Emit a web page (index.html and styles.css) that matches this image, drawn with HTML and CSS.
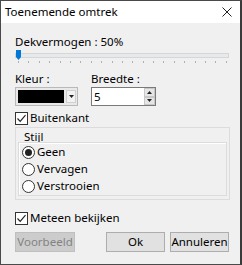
FILE: index.html
```html
<!DOCTYPE html>
<html>
<head>
<meta charset="utf-8">
<link rel="stylesheet" href="styles.css">
</head>
<body>
<div class="window">
  <div class="titlebar">
    <span class="title">Toenemende omtrek</span>
    <svg class="close" width="10" height="10" viewBox="0 0 10 10"><path d="M0.5 0.5 L9.5 9.5 M9.5 0.5 L0.5 9.5" stroke="#222" stroke-width="1" fill="none"/></svg>
  </div>
  <div class="content">
    <div class="label opacity-label">Dekvermogen : 50%</div>
    <div class="slider">
      <div class="track"></div>
      <div class="thumb"></div>
    </div>
    <div class="ticks">
      <i></i><i></i><i></i><i></i><i></i><i></i><i></i><i></i><i></i><i></i><i></i><i></i><i></i><i></i><i></i><i></i><i></i><i></i><i></i><i></i><i></i>
    </div>
    <div class="fields">
      <div class="field color-field">
        <div class="label">Kleur :</div>
        <div class="combo">
          <div class="swatch"></div>
          <div class="combo-btn"><svg width="5" height="3" viewBox="0 0 5 3"><path d="M0 0 H5 L2.5 3 Z" fill="#222"/></svg></div>
        </div>
      </div>
      <div class="field width-field">
        <div class="label">Breedte :</div>
        <div class="spin">
          <span class="spin-value">5</span>
          <div class="spin-btns">
            <div class="spin-btn"><svg width="5" height="3" viewBox="0 0 5 3"><path d="M0 3 H5 L2.5 0 Z" fill="#222"/></svg></div>
            <div class="spin-btn"><svg width="5" height="3" viewBox="0 0 5 3"><path d="M0 0 H5 L2.5 3 Z" fill="#222"/></svg></div>
          </div>
        </div>
      </div>
    </div>
    <div class="check outer-check">
      <span class="box"><svg width="11" height="11" viewBox="0 0 11 11"><path d="M1.5 5.5 L4.2 8.3 L9.5 2.2" stroke="#222" stroke-width="1.2" fill="none"/></svg></span>
      <span>Buitenkant</span>
    </div>
    <div class="group">
      <div class="group-title">Stijl</div>
      <div class="group-inner">
        <div class="radio"><span class="circle on"></span><span>Geen</span></div>
        <div class="radio"><span class="circle"></span><span>Vervagen</span></div>
        <div class="radio"><span class="circle"></span><span>Verstrooien</span></div>
      </div>
    </div>
    <div class="check preview-check">
      <span class="box"><svg width="11" height="11" viewBox="0 0 11 11"><path d="M1.5 5.5 L4.2 8.3 L9.5 2.2" stroke="#222" stroke-width="1.2" fill="none"/></svg></span>
      <span>Meteen bekijken</span>
    </div>
    <div class="buttons">
      <div class="btn disabled">Voorbeeld</div>
      <div class="btn-group">
        <div class="btn">Ok</div>
        <div class="btn">Annuleren</div>
      </div>
    </div>
  </div>
</div>
</body>
</html>
```

FILE: styles.css
```css
html, body {
  margin: 0;
  padding: 0;
  background: #3a3a3a;
}
body {
  font-family: "Noto Sans", "Open Sans", sans-serif;
  font-size: 11.5px;
  color: #000;
}
.window {
  width: 242px;
  height: 265px;
  box-sizing: border-box;
  border-top: 1px solid #4a4a4a;
  border-left: 1px solid #4a4a4a;
  border-bottom: 1px solid #4a4a4a;
  border-right: 2px solid #3a3a3a;
  background: #f0f0f0;
  display: flex;
  flex-direction: column;
  overflow: hidden;
}
.titlebar {
  height: 22px;
  background: #ffffff;
  display: flex;
  align-items: center;
  padding: 0 8px 0 4px;
  flex-shrink: 0;
}
.title {
  flex: 1;
  font-size: 11.5px;
  line-height: 14px;
}
.close {
  display: block;
}
.content {
  padding: 11px 11px 0 14px;
  display: flex;
  flex-direction: column;
}
.label {
  line-height: 16px;
  height: 16px;
}
.slider {
  position: relative;
  height: 10px;
}
.track {
  position: absolute;
  left: 0;
  right: 0;
  top: 3px;
  height: 5px;
  background: #e7eaea;
  border: 1px solid #d6d6d6;
  box-sizing: border-box;
}
.thumb {
  position: absolute;
  left: 1px;
  top: 0;
  width: 5px;
  height: 10px;
  background: #0078d7;
  clip-path: polygon(0 0, 100% 0, 100% 70%, 50% 100%, 0 70%);
}
.ticks {
  display: flex;
  justify-content: space-between;
  padding: 0 2px 0 3px;
  height: 3px;
  margin-top: 1px;
}
.ticks i {
  display: block;
  width: 1px;
  height: 2px;
  background: #b0b0b0;
}
.fields {
  display: flex;
  gap: 13px;
  margin-top: 7px;
}
.combo {
  width: 63px;
  height: 19px;
  box-sizing: border-box;
  border: 1px solid #b9b9b9;
  background: #e9e9e9;
  display: flex;
  padding: 2px 1px 2px 2px;
  gap: 2px;
}
.swatch {
  flex: 1;
  background: #000;
}
.combo-btn {
  width: 10px;
  display: flex;
  align-items: center;
  justify-content: center;
  background: #f2f2f2;
  border: 1px solid #d0d0d0;
  box-sizing: border-box;
}
.combo-btn svg, .spin-btn svg {
  display: block;
}
.spin {
  width: 65px;
  height: 19px;
  box-sizing: border-box;
  border: 1px solid #7a7a7a;
  background: #fff;
  display: flex;
  align-items: center;
  padding-left: 2px;
}
.spin-value {
  flex: 1;
  line-height: 16px;
}
.spin-btns {
  display: flex;
  flex-direction: column;
  width: 11px;
  height: 17px;
}
.spin-btn {
  flex: 1;
  display: flex;
  align-items: center;
  justify-content: center;
  background: #e6e6e6;
  border: 1px solid #c8c8c8;
  box-sizing: border-box;
}
.check {
  display: flex;
  align-items: center;
  gap: 2px;
  height: 16px;
  line-height: 16px;
}
.box {
  width: 11px;
  height: 11px;
  border: 1px solid #333;
  background: #fff;
  display: flex;
  align-items: center;
  justify-content: center;
  flex-shrink: 0;
}
.box svg {
  display: block;
}
.outer-check {
  margin-top: 4px;
}
.group {
  margin-top: 1px;
  width: 215px;
  height: 73px;
  box-sizing: border-box;
  border: 1px solid #dcdcdc;
  padding: 2px 2px 3px 2px;
  display: flex;
  flex-direction: column;
}
.group-title {
  line-height: 14px;
  height: 12px;
  padding-left: 6px;
}
.group-inner {
  flex: 1;
  border: 1px solid #dcdcdc;
  box-shadow: inset 1px 1px 0 #fff;
  padding: 1px 0 0 3px;
  display: flex;
  flex-direction: column;
  gap: 1px;
}
.radio {
  display: flex;
  align-items: center;
  gap: 2px;
  height: 16px;
  line-height: 16px;
}
.circle {
  width: 11px;
  height: 11px;
  border: 1px solid #333;
  border-radius: 50%;
  background: #fff;
  display: flex;
  align-items: center;
  justify-content: center;
  flex-shrink: 0;
}
.circle.on::after {
  content: "";
  width: 7px;
  height: 7px;
  border-radius: 50%;
  background: #222;
}
.preview-check {
  margin-top: 10px;
}
.buttons {
  display: flex;
  justify-content: space-between;
  margin-top: 6px;
}
.btn-group {
  display: flex;
  gap: 5px;
}
.btn {
  width: 59px;
  height: 20px;
  box-sizing: border-box;
  border: 1px solid #adadad;
  background: #e1e1e1;
  display: flex;
  align-items: center;
  justify-content: center;
  line-height: 16px;
}
.btn.disabled {
  width: 60px;
  background: #cccccc;
  border-color: #bfbfbf;
  color: #838383;
}
```
